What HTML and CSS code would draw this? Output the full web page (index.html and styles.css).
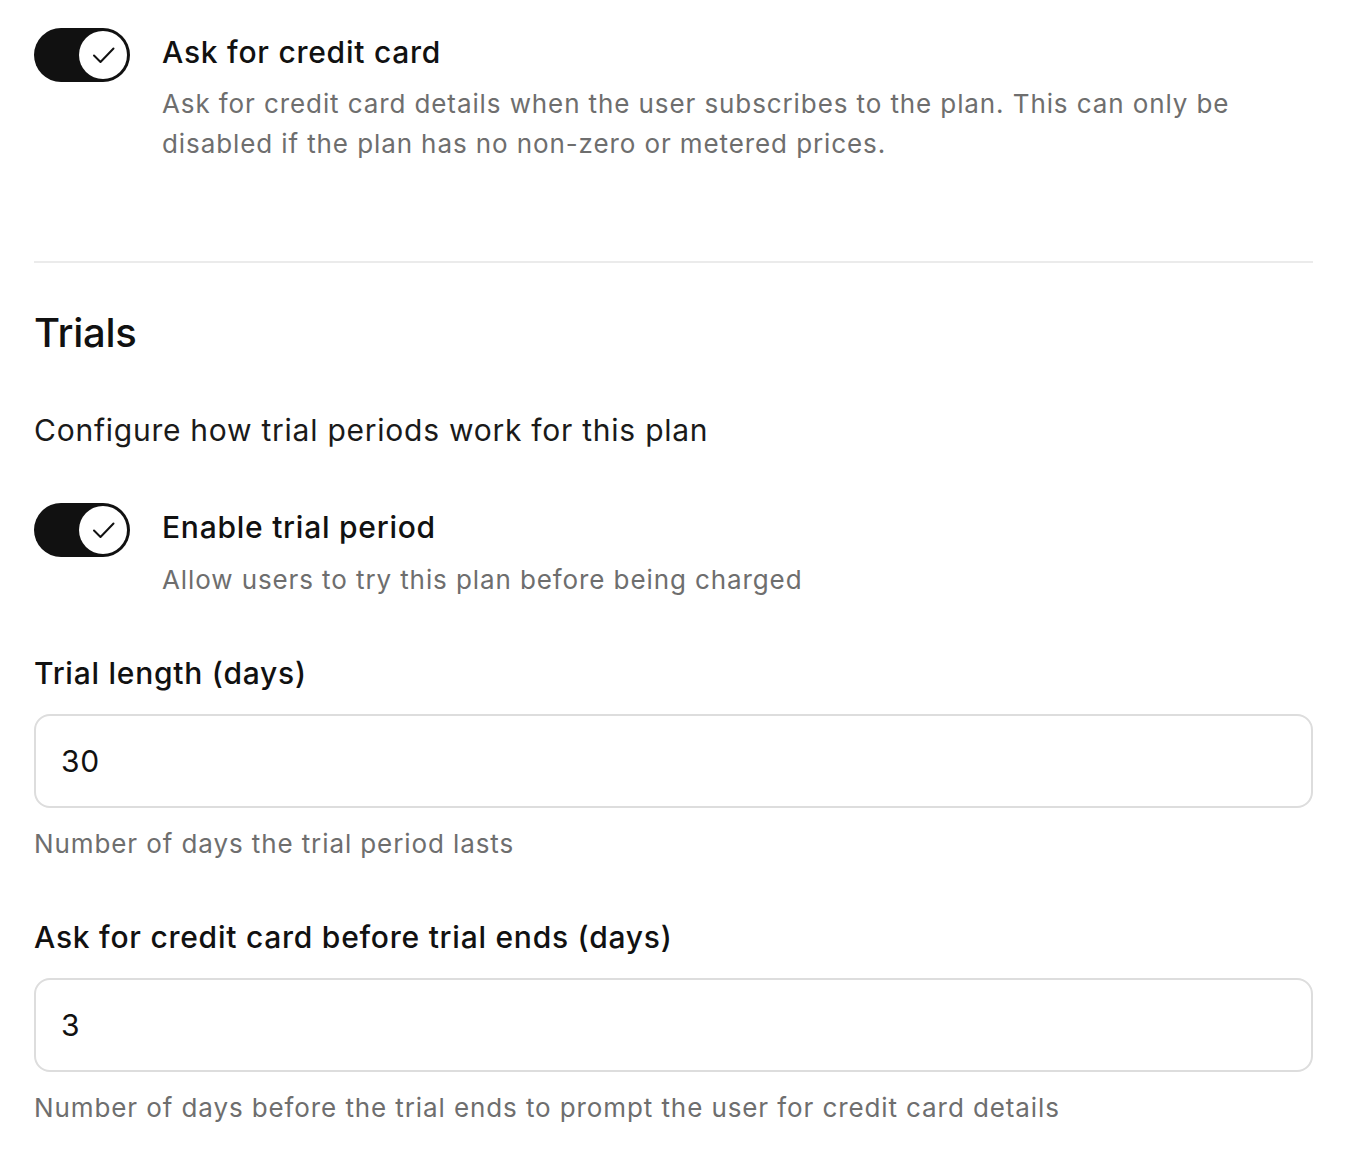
FILE: index.html
```html
<!DOCTYPE html>
<html lang="en">
<head>
    <meta charset="UTF-8">
    <meta name="viewport" content="width=device-width, initial-scale=1.0">
    <title>Plan settings</title>
    <link rel="stylesheet" href="styles.css">
</head>
<body>

    <!-- Credit card -->
    <div class="toggle-row">
        <span class="toggle on">
            <span class="knob">
                <svg viewBox="0 0 48 48" width="48" height="48"><path d="M15 24.5 L21.5 31 L34.5 17.5" fill="none" stroke="#111" stroke-width="2" stroke-linecap="round" stroke-linejoin="round"/></svg>
            </span>
        </span>
        <div class="toggle-text">
            <div class="toggle-title">Ask for credit card</div>
            <p class="toggle-desc first">Ask for credit card details when the user subscribes to the plan. This can only be disabled if the plan has no non-zero or metered prices.</p>
        </div>
    </div>

    <hr class="divider">

    <!-- Trials -->
    <h2 class="section-title">Trials</h2>
    <p class="section-sub">Configure how trial periods work for this plan</p>

    <div class="toggle-row trial">
        <span class="toggle on">
            <span class="knob">
                <svg viewBox="0 0 48 48" width="48" height="48"><path d="M15 24.5 L21.5 31 L34.5 17.5" fill="none" stroke="#111" stroke-width="2" stroke-linecap="round" stroke-linejoin="round"/></svg>
            </span>
        </span>
        <div class="toggle-text">
            <div class="toggle-title">Enable trial period</div>
            <p class="toggle-desc">Allow users to try this plan before being charged</p>
        </div>
    </div>

    <div class="field">
        <label for="trialLength">Trial length (days)</label>
        <input type="text" id="trialLength" value="30">
        <p class="hint">Number of days the trial period lasts</p>
    </div>

    <div class="field">
        <label for="cardDays">Ask for credit card before trial ends (days)</label>
        <input type="text" id="cardDays" value="3">
        <p class="hint">Number of days before the trial ends to prompt the user for credit card details</p>
    </div>

</body>
</html>
```

FILE: styles.css
```css
body {
    margin: 0;
    padding: 28px 39px 40px 34px;
    font-family: 'Inter', 'Noto Sans', sans-serif;
    background-color: #ffffff;
    color: #111111;
}

/* Toggle rows */
.toggle-row {
    display: flex;
    align-items: flex-start;
    gap: 32px;
}

.toggle-row.trial {
    margin-top: 55px;
}

.toggle {
    flex: 0 0 auto;
    display: flex;
    justify-content: flex-end;
    align-items: center;
    box-sizing: border-box;
    width: 96px;
    height: 54px;
    padding: 3px;
    border-radius: 27px;
    background-color: #111111;
}

.knob {
    width: 48px;
    height: 48px;
    border-radius: 50%;
    background-color: #ffffff;
}

.knob svg {
    display: block;
}

.toggle-text {
    padding-top: 6px;
}

.toggle-title {
    font-size: 30px;
    line-height: 36px;
    font-weight: 500;
    letter-spacing: 0.75px;
    color: #111111;
}

.toggle-desc {
    margin: 15px 0 0;
    font-size: 26px;
    line-height: 40px;
    letter-spacing: 0.9px;
    color: #6e6e6e;
}

.toggle-desc.first {
    margin-top: 14px;
}

.divider {
    margin: 97px 0 0;
    border: none;
    border-top: 2px solid #ebebeb;
}

.section-title {
    margin: 46px 0 0;
    font-size: 40px;
    line-height: 48px;
    font-weight: 500;
    letter-spacing: -0.3px;
    color: #111111;
}

.section-sub {
    margin: 55px 0 0;
    font-size: 30px;
    line-height: 36px;
    letter-spacing: 0.75px;
    color: #1a1a1a;
}

/* Fields */
.field {
    margin-top: 55px;
}

.field label {
    display: block;
    font-size: 30px;
    line-height: 36px;
    font-weight: 500;
    letter-spacing: 0.75px;
    color: #111111;
}

.field input {
    display: block;
    box-sizing: border-box;
    width: 100%;
    height: 94px;
    margin-top: 23px;
    padding: 0 25px;
    font-family: inherit;
    font-size: 30px;
    letter-spacing: 0.75px;
    color: #111111;
    background-color: #ffffff;
    border: 2px solid #dddddd;
    border-radius: 16px;
    outline: none;
}

.hint {
    margin: 16px 0 0;
    font-size: 26px;
    line-height: 40px;
    letter-spacing: 0.9px;
    color: #6e6e6e;
}
```
